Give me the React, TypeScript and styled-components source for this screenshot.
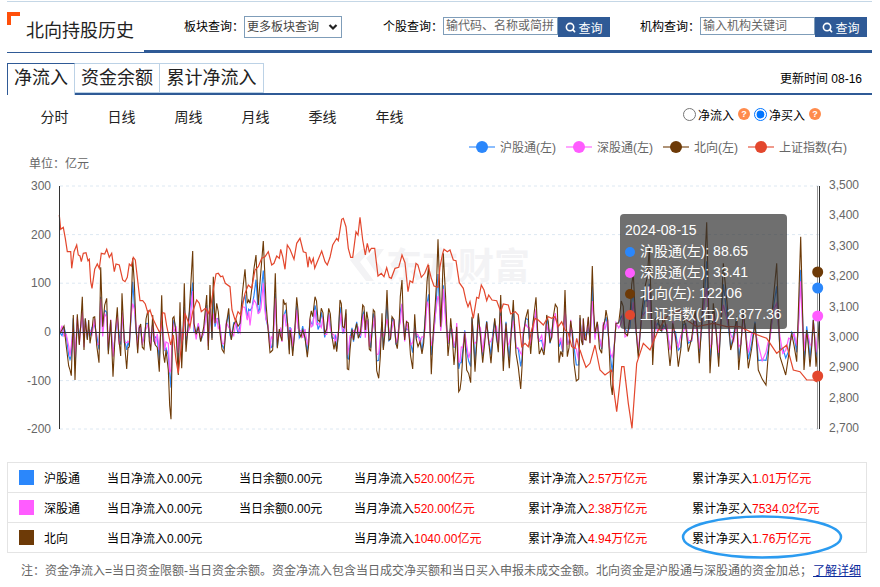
import styled, { createGlobalStyle } from "styled-components";
import { Search } from "lucide-react";

const BLUE = "#2f5a96";
const FONT = '"Liberation Sans", "Noto Sans CJK SC", sans-serif';

const GlobalStyle = createGlobalStyle`
  html, body {
    margin: 0;
    padding: 0;
    background: #fff;
    color: #000;
    font-family: ${FONT};
    font-size: 12px;
  }
  * {
    box-sizing: border-box;
  }
`;

const Page = styled.div`
  width: 865px;
  margin: 1px 0 0 7px;
  border-top: 1px solid #c5d7e6;
`;

const Header = styled.header`
  display: flex;
  height: 51px;
`;

const TitleBlock = styled.div`
  position: relative;
  width: 137px;
  border-bottom: 1px solid ${BLUE};
  padding: 21px 0 0 19px;
  font-size: 18px;
  line-height: 16px;
  color: #222;

  &::before {
    content: "";
    position: absolute;
    left: 0;
    top: 10px;
    width: 9px;
    height: 9px;
    border-left: 4px solid #ff4f0a;
    border-top: 4px solid #ff4f0a;
  }
`;

const Toolbar = styled.div`
  flex: 1;
  display: flex;
  padding: 14px 0 0 40px;
  border-bottom: 3px solid ${BLUE};
`;

const QueryGroup = styled.div<{ $width: number }>`
  display: flex;
  align-items: flex-start;
  width: ${({ $width }) => $width}px;
  height: 22px;
  font-size: 12px;
`;

const QueryLabel = styled.span`
  width: 60px;
  line-height: 22px;
`;

const SelectWrap = styled.div`
  position: relative;
  width: 98px;
  height: 22px;
  color: #222;

  svg {
    position: absolute;
    right: 4px;
    top: 5px;
    pointer-events: none;
  }
`;

const BoardSelect = styled.select`
  width: 98px;
  height: 22px;
  padding: 0 0 0 2px;
  border: 1px solid #7f9db9;
  background: #fff;
  border-radius: 0;
  color: #444;
  font: 12px ${FONT};
  appearance: none;
`;

const QueryInput = styled.input`
  width: 115px;
  height: 18px;
  margin-top: 1px;
  padding: 0 2px;
  border: 1px solid #7f9db9;
  border-radius: 0;
  font: 12px ${FONT};
  color: #555;

  &::placeholder {
    color: #666;
    opacity: 1;
  }
`;

const QueryButton = styled.button`
  display: flex;
  align-items: center;
  justify-content: center;
  gap: 2px;
  width: 52px;
  height: 20px;
  margin-top: 1px;
  padding: 0;
  border: 0;
  background: ${BLUE};
  color: #fff;
  font: 12px ${FONT};
`;

const TabBar = styled.div`
  display: flex;
  align-items: flex-end;
  height: 32px;
  margin-top: 10px;
  border-bottom: 2px solid ${BLUE};
`;

const Tab = styled.div<{ $active?: boolean; $width: number }>`
  width: ${({ $width }) => $width}px;
  height: ${({ $active }) => ($active ? 32 : 30)}px;
  margin-bottom: ${({ $active }) => ($active ? -2 : 0)}px;
  background: #fff;
  border: 1px solid #bcd2e6;
  border-bottom: ${({ $active }) => ($active ? "0" : "1px solid #bcd2e6")};
  border-left-width: ${({ $active }) => ($active ? 1 : 0)}px;
  border-top-color: ${({ $active }) => ($active ? BLUE : "#bcd2e6")};
  border-left-color: ${({ $active }) => ($active ? BLUE : "#bcd2e6")};
  font-size: 18px;
  line-height: 29px;
  text-align: center;
  color: #222;
`;

const UpdateTime = styled.span`
  margin-left: auto;
  padding: 0 10px 7px 0;
  font-size: 12px;
  line-height: 14px;
`;

const PeriodBar = styled.div`
  display: flex;
  align-items: center;
  height: 41px;
  padding-left: 14px;
`;

const Period = styled.span`
  width: 67px;
  font-size: 14px;
  text-align: center;
  color: #222;
`;

const ModeGroup = styled.div`
  display: flex;
  align-items: center;
  margin: -3px 51px 0 auto;
`;

const ModeRadio = styled.input`
  width: 13px;
  height: 13px;
  margin: 0 2px 0 4px;
`;

const HelpBadge = styled.span`
  width: 12px;
  height: 12px;
  margin-left: 4px;
  border-radius: 50%;
  background: #ff8b4c;
  color: #fff;
  font-size: 9px;
  font-weight: 700;
  line-height: 12px;
  text-align: center;
`;

const Legend = styled.div`
  display: flex;
  justify-content: flex-end;
  gap: 10px;
  height: 21px;
  padding-right: 25px;
`;

const LegendItem = styled.div`
  display: flex;
  align-items: center;
  gap: 5px;
  color: #666;
  font-size: 12px;
`;

const Unit = styled.div`
  height: 13px;
  padding-left: 22px;
  color: #666;
  font-size: 12px;
  line-height: 15px;
`;

const ChartWrap = styled.div`
  position: relative;
  height: 270px;
`;

const ChartSvg = styled.svg`
  display: block;
  font-family: ${FONT};
`;

const Tooltip = styled.div`
  position: absolute;
  left: 613px;
  top: 44px;
  width: 167px;
  height: 115px;
  padding: 6px 5px;
  border-radius: 4px;
  background: rgba(50, 50, 50, 0.7);
  color: #fff;
  font-size: 14px;
  line-height: 21px;
  white-space: nowrap;
`;

const TipRow = styled.div`
  display: flex;
  align-items: center;
  gap: 5px;
`;

const TipDot = styled.i<{ $color: string }>`
  width: 10px;
  height: 10px;
  border-radius: 50%;
  background: ${({ $color }) => $color};
`;

const SummaryWrap = styled.div`
  position: relative;
  width: 860px;
  margin-top: 22px;
  border: 1px solid #e4e4e4;
  border-bottom-width: 0;
`;

const SummaryRow = styled.div`
  display: grid;
  grid-template-columns: 88px 132px 115px 174px 164px 1fr;
  align-items: center;
  height: 30px;
  padding-left: 11px;
  border-bottom: 1px solid #e4e4e4;
`;

const RowName = styled.div`
  display: flex;
  align-items: center;
  gap: 10px;
  font-size: 12px;
`;

const Swatch = styled.i<{ $color: string }>`
  width: 15px;
  height: 15px;
  background: ${({ $color }) => $color};
`;

const Red = styled.span`
  color: #f00;
`;

const Oval = styled.svg`
  position: absolute;
  left: 674px;
  top: 53px;
  overflow: visible;
`;

const Note = styled.p`
  margin: 9px 0 0;
  padding-left: 14px;
  color: #666;
  font-size: 12px;
  line-height: 18px;
  white-space: nowrap;
`;

const MoreLink = styled.a`
  color: #0a2a9c;
  text-decoration: underline;
  margin-left: 1px;
`;

// traced from the picture, in zoomed crop coordinates (3x)
const redA = "178,135 182,178 190,172 196,205 202,245 212,245 215,295 222,245 230,225 235,255 240,258 244,275 250,250 258,248 264,272 268,268 272,335 276,355 284,298 292,282 298,295 304,250 314,252 320,238 328,262 335,250 343,305 348,282 358,285 368,330 375,335 382,322 388,282 394,288 400,262 406,270 420,392 428,392 436,402 444,430 450,420 458,445 470,470 480,490 488,428 494,430 500,468 512,525 520,495 528,570 535,610 545,520 555,430 570,470 578,425 590,390 598,400 604,425 616,415 625,430 632,410 640,360 648,312 655,310 662,320 668,318 676,340 690,350 696,420 706,452 714,425 722,435 735,370 745,345 755,355 765,300 775,290 785,265 795,260 805,245 815,285 822,280 830,258 838,265 842,238 848,260 855,298 862,225";
const redB = "0,238 12,268 20,220 30,205 40,245 48,248 54,292 58,260 64,280 70,265 74,295 80,280 95,243 105,275 112,285 120,262 128,225 140,205 145,212 155,148 160,145 168,170 175,235 182,262 188,262 198,185 204,195 210,142 218,210 226,255 232,220 238,245 244,235 254,235 264,318 274,310 282,320 290,293 298,322 304,325 315,295 326,292 336,255 345,278 354,365 360,332 368,338 378,280 384,285 394,322 404,310 414,285 424,325 432,348 444,352 450,290 458,250 462,238 472,245 480,240 490,270 498,272 508,338 520,355 528,392 534,410 540,395 550,445 560,382 566,385 574,345 582,360 590,392 596,375 606,390 620,392 632,425 640,402 655,405 662,432 676,425 685,435 695,530 705,520 715,530 725,480 735,445 745,450 760,465 775,440 785,445 795,440 805,470 815,455 825,480 835,490 845,530 855,535 860,505 870,545";
const redC = "0,540 8,565 18,592 30,580 45,525 60,600 75,615 95,600 100,650 110,725 125,590 132,590 145,700 156,775 170,580 190,520 210,540 235,480 260,440 300,420 320,450 350,470 400,460 440,470 480,470 520,490 560,505 590,550 620,525 640,600 660,605 680,630 700,630 710,635 718,620";
const brownA = "180,490 192,468 206,588 214,617 220,435 225,630 232,433 238,525 247,380 252,540 256,445 262,510 266,450 270,520 276,480 284,440 297,578 302,292 308,470 320,385 325,553 332,450 339,620 352,412 362,558 366,370 380,597 388,530 398,265 408,470 413,550 422,462 432,538 444,420 452,542 458,435 466,525 478,605 485,376 490,550 498,540 505,600 513,748 518,445 522,440 535,615 540,397 545,595 553,340 558,545 578,243 582,460 595,470 602,515 620,375 625,540 630,345 636,510 640,320 645,460 650,400 660,490 672,548 686,415 694,510 708,450 720,460 735,298 742,400 750,400 756,350 768,255 775,405 783,300 790,213 798,400 810,548 818,540 826,310 832,535 838,477 846,512 850,388 858,400 868,553";
const brownB = "0,480 8,558 20,382 28,490 38,480 52,562 60,445 68,440 75,380 84,450 94,415 104,490 116,415 126,500 132,538 140,545 150,390 158,470 168,418 172,597 180,540 186,478 195,480 205,505 218,405 226,480 230,425 238,538 246,480 254,425 260,602 266,625 276,430 280,540 291,360 297,510 306,440 318,520 326,490 336,330 344,510 355,458 368,597 374,433 384,530 396,552 406,435 416,285 424,613 436,400 444,208 452,470 460,250 474,558 482,445 492,585 500,470 506,665 514,628 524,490 530,600 542,638 546,440 555,605 565,430 578,578 590,455 603,580 614,445 625,547 632,375 640,603 648,460 658,595 670,390 678,550 692,657 700,500 714,418 722,552 738,382 748,552 762,555 770,435 780,518 790,440 802,413 807,578 818,560 825,360 832,560 842,452 852,580 866,627";
const brownC = "0,435 8,525 10,445 18,510 25,440 30,520 37,288 45,490 52,455 65,550 75,450 78,420 88,545 97,675 108,460 124,393 135,490 150,440 160,310 175,565 195,350 208,235 218,585 225,450 240,480 250,430 270,588 278,460 295,590 310,440 325,545 345,420 358,580 380,157 390,610 400,400 416,590 430,280 452,540 470,440 476,600 490,420 505,595 525,460 535,600 558,645 570,490 590,280 600,560 617,615 635,490 650,575 662,200 672,600 680,480 690,590 700,450 708,590 718,450";

const trace = (raw: string, originX: number) =>
  raw.split(" ").map((pair) => {
    const [x, y] = pair.split(",").map(Number);
    return [originX + x / 3, 170 + y / 3];
  });

// the real series has about one point per 2px, fill in between the traced spikes
const densify = (points: number[][]) =>
  points.flatMap(([x, y], i) => {
    const next = points[i + 1];
    if (!next || next[0] - x < 2.4) return [[x, y]];
    return [
      [x, y],
      [(x + next[0]) / 2, (y + next[1]) / 2 + Math.sin(i * 3.1) * 11],
    ];
  });

const ZERO_Y = 332;
const indexPoints = [...trace(redA, 0), ...trace(redB, 290), ...trace(redC, 580)];
const northPoints = densify([...trace(brownA, 0), ...trace(brownB, 290), ...trace(brownC, 580)]);
const shPoints = northPoints.map(([x, y], i) => [x, ZERO_Y + (y - ZERO_Y) * 0.62 + Math.sin(i * 1.7) * 5]);
const szPoints = northPoints.map(([x, y], i) => [x, ZERO_Y + (y - ZERO_Y) * 0.46 - Math.sin(i * 2.3) * 7]);

const toPath = (points: number[][]) => points.map(([x, y]) => `${x.toFixed(1)},${y.toFixed(1)}`).join(" ");

const COLORS = { sh: "#2b87fb", sz: "#ff5cff", north: "#6d3a07", index: "#e3472d" };

const leftTicks = [
  { label: "300", y: 186 },
  { label: "200", y: 234.6 },
  { label: "100", y: 283.2 },
  { label: "0", y: 332 },
  { label: "-100", y: 380.6 },
  { label: "-200", y: 429 },
];

const rightTicks = ["3,500", "3,400", "3,300", "3,200", "3,100", "3,000", "2,900", "2,800", "2,700"];

const legendItems = [
  { label: "沪股通(左)", color: COLORS.sh },
  { label: "深股通(左)", color: COLORS.sz },
  { label: "北向(左)", color: COLORS.north },
  { label: "上证指数(右)", color: COLORS.index },
];

const tipRows = [
  { text: "沪股通(左): 88.65", color: COLORS.sh },
  { text: "深股通(左): 33.41", color: COLORS.sz },
  { text: "北向(左): 122.06", color: COLORS.north },
  { text: "上证指数(右): 2,877.36", color: COLORS.index },
];

const summary = [
  { name: "沪股通", color: COLORS.sh, balance: true, month: "520.00亿元", flow: "2.57万亿元", buy: "1.01万亿元" },
  { name: "深股通", color: COLORS.sz, balance: true, month: "520.00亿元", flow: "2.38万亿元", buy: "7534.02亿元" },
  { name: "北向", color: COLORS.north, balance: false, month: "1040.00亿元", flow: "4.94万亿元", buy: "1.76万亿元" },
];

function NorthChart() {
  return (
    <ChartSvg width="865" height="270" viewBox="7 170 865 270">
      <g fill="#f3f3f5">
        <path d="M350 260 L362 249 L372 249 L360 262 L374 281 L366 281 Z" />
        <path d="M366 258 L376 249 L384 249 L376 260 L384 272 L378 276 Z" />
        <text x="386" y="279" fontSize="36" fontWeight="700">东方财富</text>
      </g>
      {leftTicks.map((t) =>
        t.label === "0" ? null : (
          <line key={t.label} x1="60" x2="820" y1={t.y} y2={t.y} stroke="#dde8f2" strokeDasharray="3 3" />
        ),
      )}
      <polyline points={toPath(shPoints)} fill="none" stroke={COLORS.sh} strokeWidth="1.2" />
      <polyline points={toPath(szPoints)} fill="none" stroke={COLORS.sz} strokeWidth="1.2" />
      <polyline points={toPath(northPoints)} fill="none" stroke={COLORS.north} strokeWidth="1.1" />
      <polyline points={toPath(indexPoints)} fill="none" stroke={COLORS.index} strokeWidth="1.2" />
      <line x1="59.5" x2="59.5" y1="186" y2="429" stroke="#333" />
      <line x1="60" x2="820" y1="332.5" y2="332.5" stroke="#333" />
      <line x1="819.5" x2="819.5" y1="186" y2="429" stroke="#333" />
      <line x1="817.5" x2="817.5" y1="186" y2="429" stroke="#999" />
      <g fill="#666" fontSize="12">
        {leftTicks.map((t) => (
          <text key={t.label} x="51" y={t.y + 4} textAnchor="end">{t.label}</text>
        ))}
        {rightTicks.map((label, i) => (
          <text key={label} x="829" y={189 + i * 30.4}>{label}</text>
        ))}
      </g>
      <circle cx="817.7" cy="272" r="5.5" fill={COLORS.north} />
      <circle cx="817.7" cy="288" r="5.5" fill={COLORS.sh} />
      <circle cx="817.7" cy="316" r="5.5" fill={COLORS.sz} />
      <circle cx="817.7" cy="376" r="5.5" fill={COLORS.index} />
    </ChartSvg>
  );
}

export default function App() {
  return (
    <Page>
      <GlobalStyle />
      <Header>
        <TitleBlock>北向持股历史</TitleBlock>
        <Toolbar>
          <QueryGroup $width={199}>
            <QueryLabel>板块查询：</QueryLabel>
            <SelectWrap>
              <BoardSelect defaultValue="more">
                <option value="more">更多板块查询</option>
              </BoardSelect>
              <svg width="10" height="12" viewBox="0 0 10 12" fill="none" stroke="currentColor" strokeWidth="2.2">
                <path d="M1.5 4 L5 7.5 L8.5 4" />
              </svg>
            </SelectWrap>
          </QueryGroup>
          <QueryGroup $width={257}>
            <QueryLabel>个股查询：</QueryLabel>
            <QueryInput placeholder="输代码、名称或简拼" />
            <QueryButton>
              <Search size={11} strokeWidth={3.5} />
              查询
            </QueryButton>
          </QueryGroup>
          <QueryGroup $width={227}>
            <QueryLabel>机构查询：</QueryLabel>
            <QueryInput placeholder="输入机构关键词" />
            <QueryButton>
              <Search size={11} strokeWidth={3.5} />
              查询
            </QueryButton>
          </QueryGroup>
        </Toolbar>
      </Header>

      <TabBar>
        <Tab $active $width={68}>净流入</Tab>
        <Tab $width={85}>资金余额</Tab>
        <Tab $width={104}>累计净流入</Tab>
        <UpdateTime>更新时间 08-16</UpdateTime>
      </TabBar>

      <PeriodBar>
        {["分时", "日线", "周线", "月线", "季线", "年线"].map((p) => (
          <Period key={p}>{p}</Period>
        ))}
        <ModeGroup>
          <ModeRadio type="radio" name="mode" />
          净流入
          <HelpBadge>?</HelpBadge>
          <ModeRadio type="radio" name="mode" defaultChecked />
          净买入
          <HelpBadge>?</HelpBadge>
        </ModeGroup>
      </PeriodBar>

      <Legend>
        {legendItems.map((item) => (
          <LegendItem key={item.label}>
            <svg width="26" height="12" viewBox="0 0 26 12">
              <line x1="0" x2="26" y1="6" y2="6" stroke={item.color} strokeOpacity="0.55" strokeWidth="2" />
              <circle cx="13" cy="6" r="6" fill={item.color} />
            </svg>
            {item.label}
          </LegendItem>
        ))}
      </Legend>
      <Unit>单位：亿元</Unit>

      <ChartWrap>
        <NorthChart />
        <Tooltip>
          <div>2024-08-15</div>
          {tipRows.map((row) => (
            <TipRow key={row.text}>
              <TipDot $color={row.color} />
              {row.text}
            </TipRow>
          ))}
        </Tooltip>
      </ChartWrap>

      <SummaryWrap>
        {summary.map((row) => (
          <SummaryRow key={row.name}>
            <RowName>
              <Swatch $color={row.color} />
              {row.name}
            </RowName>
            <div>当日净流入0.00元</div>
            <div>{row.balance ? "当日余额0.00元" : ""}</div>
            <div>当月净流入<Red>{row.month}</Red></div>
            <div>累计净流入<Red>{row.flow}</Red></div>
            <div>累计净买入<Red>{row.buy}</Red></div>
          </SummaryRow>
        ))}
        <Oval width="160" height="42" viewBox="0 0 160 42">
          <ellipse cx="80" cy="21" rx="79" ry="20.5" fill="none" stroke="#2b9bf0" strokeWidth="2.5" />
        </Oval>
      </SummaryWrap>

      <Note>
        注：资金净流入=当日资金限额-当日资金余额。资金净流入包含当日成交净买额和当日买入申报未成交金额。北向资金是沪股通与深股通的资金加总；
        <MoreLink href="#">了解详细</MoreLink>
      </Note>
    </Page>
  );
}
